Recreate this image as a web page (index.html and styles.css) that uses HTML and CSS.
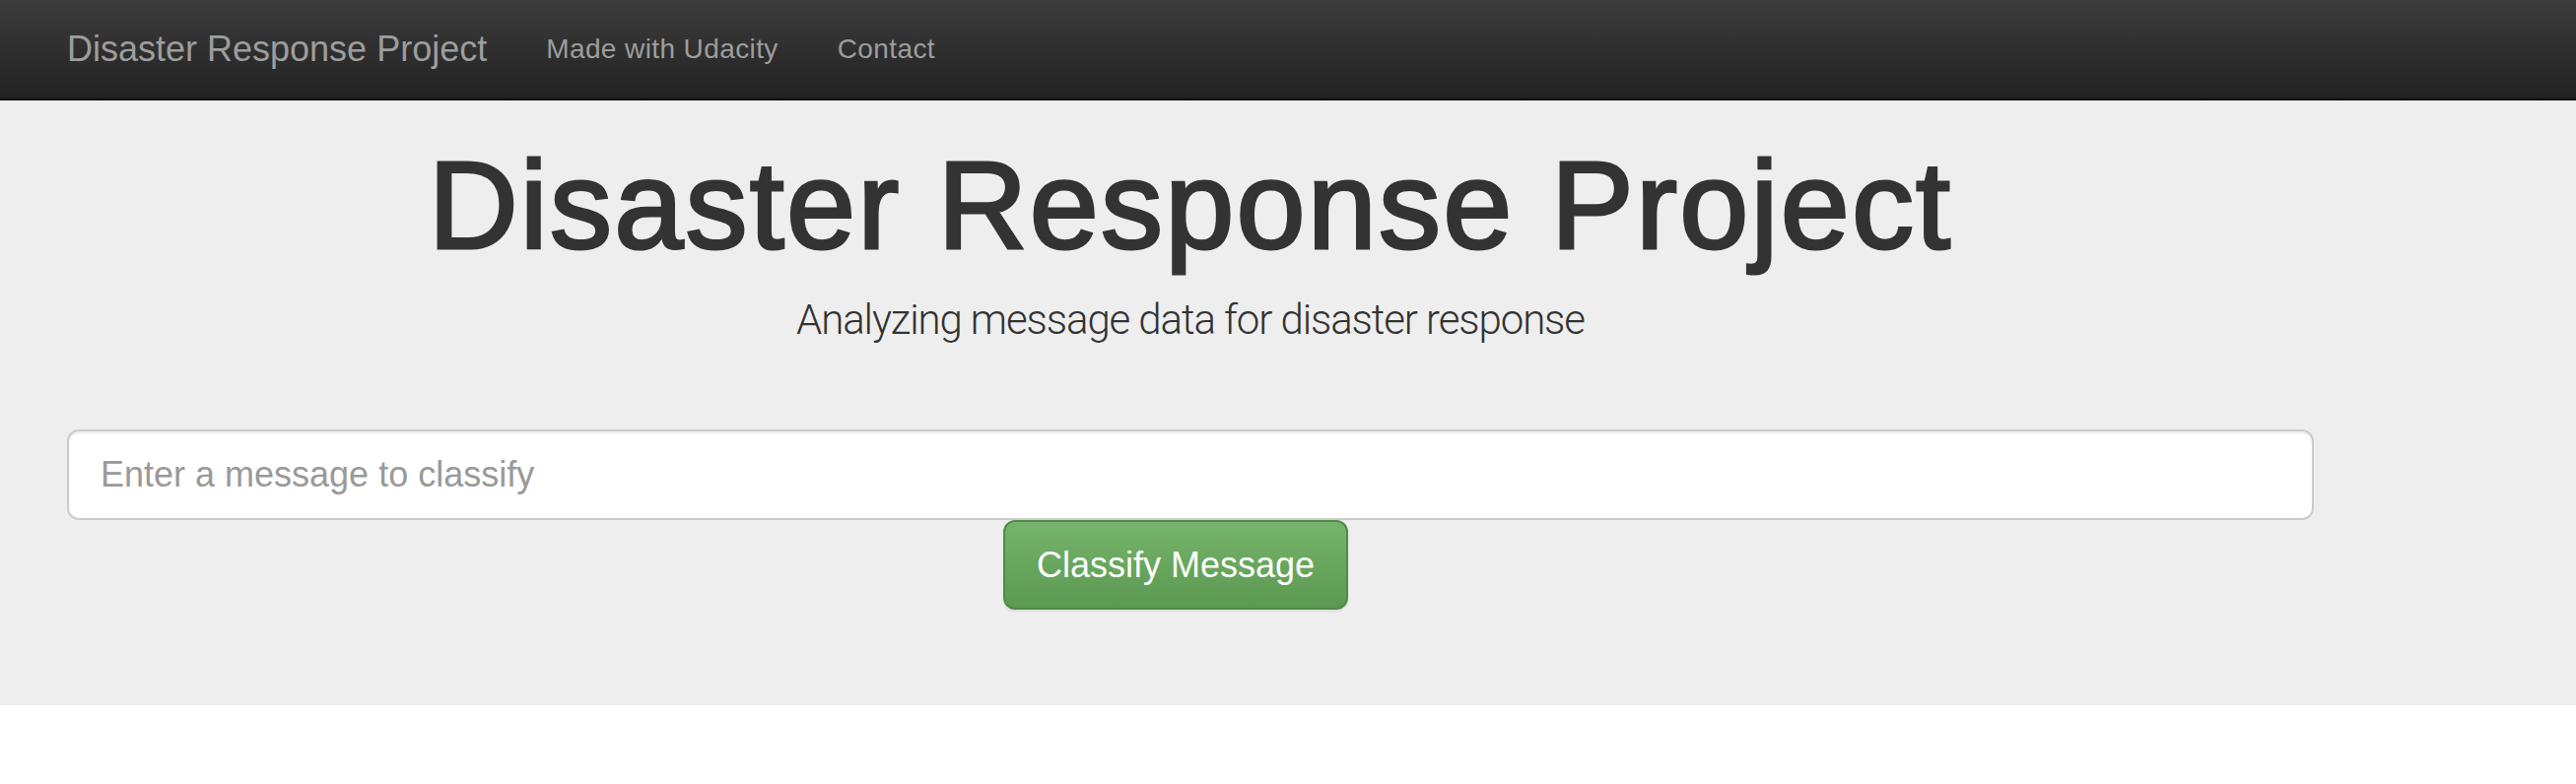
FILE: index.html
```html
<!DOCTYPE html>
<html lang="en">
<head>
<meta charset="utf-8">
<title>Disaster Response Project</title>
<link rel="stylesheet" href="styles.css">
</head>
<body>
<nav class="navbar">
  <div class="navbar-inner">
    <a class="brand" href="#">Disaster Response Project</a>
    <ul class="nav">
      <li><a href="#">Made with Udacity</a></li>
      <li><a href="#">Contact</a></li>
    </ul>
  </div>
</nav>
<div class="jumbotron">
  <div class="container">
    <h1 class="title">Disaster Response Project</h1>
    <p class="lead">Analyzing message data for disaster response</p>
    <form class="classify-form">
      <input class="message-input" type="text" placeholder="Enter a message to classify">
      <div class="btn-row">
        <button class="btn-success" type="button">Classify Message</button>
      </div>
    </form>
  </div>
</div>
</body>
</html>
```

FILE: styles.css
```css
html, body {
  margin: 0;
  padding: 0;
  background: #fff;
}

body {
  font-family: "Liberation Sans", Arial, sans-serif;
  color: #333;
}

.navbar {
  height: 100px;
  background: linear-gradient(to bottom, #3c3c3c 0%, #222 100%);
  border-bottom: 2px solid #080808;
}

.navbar-inner {
  display: flex;
  align-items: center;
  height: 100%;
  padding-left: 38px;
}

.brand {
  font-size: 36px;
  color: #9d9d9d;
  text-decoration: none;
  padding: 0 30px;
  line-height: 40px;
}

.nav {
  display: flex;
  list-style: none;
  margin: 0;
  padding: 0;
}

.nav a {
  display: block;
  padding: 0 30px;
  font-size: 28px;
  letter-spacing: 0.4px;
  color: #9d9d9d;
  text-decoration: none;
  line-height: 40px;
}

.jumbotron {
  background: #eee;
  padding: 38px 0 97px;
}

.container {
  width: 2280px;
  margin-left: 68px;
}

.title {
  margin: 0;
  text-align: center;
  font-size: 126px;
  line-height: 1.1;
  letter-spacing: 2.2px;
  font-weight: normal;
  color: #333;
  -webkit-text-stroke: 3px #333;
}

.lead {
  margin: 17px 0 0;
  text-align: center;
  font-family: Roboto, "Liberation Sans", sans-serif;
  font-weight: 300;
  font-size: 42px;
  letter-spacing: -1.1px;
  line-height: 1.4;
  color: #333;
}

.classify-form {
  margin-top: 82px;
}

.message-input {
  display: block;
  box-sizing: border-box;
  width: 100%;
  height: 92px;
  margin: 0;
  padding: 0 32px;
  border: 2px solid #ccc;
  border-radius: 12px;
  background: #fff;
  box-shadow: inset 0 2px 2px rgba(0, 0, 0, 0.075);
  font-family: "Liberation Sans", Arial, sans-serif;
  font-size: 36px;
  color: #555;
  outline: none;
}

.message-input::placeholder {
  color: #999;
}

.btn-row {
  display: flex;
  padding-left: 950px;
}

.btn-success {
  box-sizing: border-box;
  width: 350px;
  height: 91px;
  margin: 0;
  padding: 0;
  border: 2px solid #4f8c46;
  border-radius: 12px;
  background: linear-gradient(to bottom, #76b46b 0%, #5b9952 100%);
  box-shadow: 0 2px 2px rgba(0, 0, 0, 0.08);
  font-family: "Liberation Sans", Arial, sans-serif;
  font-size: 36px;
  color: #fff;
  cursor: pointer;
}
```
